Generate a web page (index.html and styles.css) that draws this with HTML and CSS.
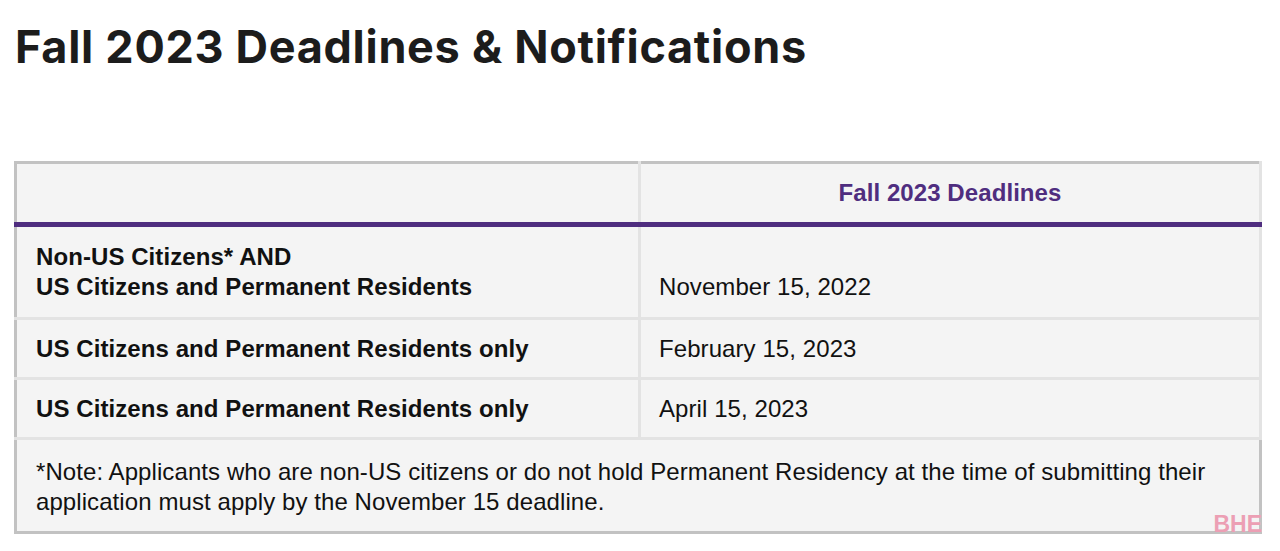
FILE: index.html
```html
<!DOCTYPE html>
<html lang="en">
<head>
<meta charset="utf-8">
<title>Fall 2023 Deadlines &amp; Notifications</title>
<link rel="stylesheet" href="styles.css">
</head>
<body>
<main class="page">
  <h1 class="title">Fall 2023 Deadlines &amp; Notifications</h1>
  <div class="table-wrap">
    <table class="deadlines">
      <thead>
        <tr>
          <th class="corner"></th>
          <th class="col-head">Fall 2023 Deadlines</th>
        </tr>
      </thead>
      <tbody>
        <tr class="tall">
          <td class="who">Non-US Citizens* AND<br>US Citizens and Permanent Residents</td>
          <td class="date">November 15, 2022</td>
        </tr>
        <tr>
          <td class="who">US Citizens and Permanent Residents only</td>
          <td class="date">February 15, 2023</td>
        </tr>
        <tr>
          <td class="who">US Citizens and Permanent Residents only</td>
          <td class="date">April 15, 2023</td>
        </tr>
        <tr class="note-row">
          <td class="note" colspan="2">*Note: Applicants who are non-US citizens or do not hold Permanent Residency at the time of submitting their application must apply by the November 15 deadline.</td>
        </tr>
      </tbody>
    </table>
    <span class="watermark">BHE</span>
  </div>
</main>
</body>
</html>
```

FILE: styles.css
```css
html, body {
  margin: 0;
  padding: 0;
  background: #ffffff;
}

.page {
  padding: 24px 18px 0 14px;
}

.title {
  margin: 0 0 0 1px;
  font-family: Inter, "Noto Sans", sans-serif;
  font-weight: 700;
  font-size: 45px;
  line-height: 45px;
  color: #1c1c1c;
  letter-spacing: 0.7px;
}

.table-wrap {
  position: relative;
  margin-top: 92px;
}

.deadlines {
  width: 100%;
  border-collapse: collapse;
  border: 3px solid #c2c2c2;
  background: #f4f4f4;
  font-family: "Liberation Sans", Arial, Helvetica, sans-serif;
  font-size: 24px;
  line-height: 30px;
  letter-spacing: 0.08px;
  color: #111111;
}

.deadlines th,
.deadlines td {
  border: 3px solid #e3e3e3;
  text-align: left;
  vertical-align: middle;
}

.deadlines th {
  height: 58px;
  padding: 0 18px;
  border-top: 3px solid #c2c2c2;
  border-bottom: 5px solid #4f2d7f;
}

.deadlines .corner {
  width: 585px;
  border-left: 3px solid #c2c2c2;
}

.deadlines .col-head {
  text-align: center;
  color: #4f2d7f;
  font-weight: 700;
}

.deadlines td {
  padding: 14px 18px 13px 19px;
}

.deadlines .who {
  font-weight: 700;
  border-left: 3px solid #c2c2c2;
}

.deadlines .date {
  padding-left: 18px;
}

.tall td {
  padding-top: 15px;
  padding-bottom: 15px;
}

.tall .date {
  vertical-align: bottom;
}

.note-row .note {
  border: 3px solid #c2c2c2;
  padding: 17px 18px 14px 19px;
}

.watermark {
  position: absolute;
  right: 0;
  bottom: 1px;
  font-family: "Liberation Sans", Arial, sans-serif;
  font-weight: 700;
  font-size: 23px;
  line-height: 18px;
  color: #ec9fb4;
  letter-spacing: 0;
}
```
